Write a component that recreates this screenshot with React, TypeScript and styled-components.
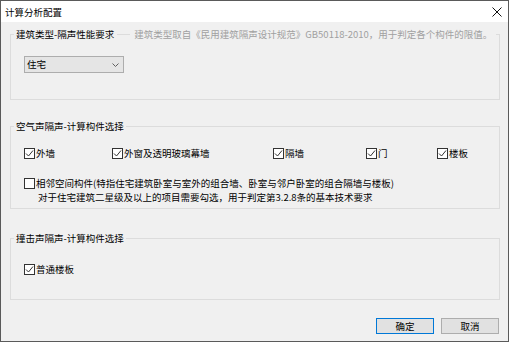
import styled, { createGlobalStyle } from "styled-components";

const GlobalStyle = createGlobalStyle`
  html, body {
    margin: 0;
    padding: 0;
    background: #ffffff;
  }
  body {
    font-family: "Noto Sans CJK SC", "Noto Sans", sans-serif;
    font-size: 9.5px;
    color: #000;
  }
`;

const Window = styled.div`
  width: 509px;
  height: 342px;
  box-sizing: border-box;
  border: 1px solid #5a5a5a;
  background: #f0f0f0;
  display: flex;
  flex-direction: column;
`;

const TitleBar = styled.div`
  height: 21px;
  background: #ffffff;
  display: flex;
  align-items: center;
  justify-content: space-between;
  padding: 0 6px 0 4px;
  line-height: 16px;
`;

const CloseButton = styled.span`
  display: flex;
  width: 10px;
  height: 10px;
  margin-top: 0px;
`;

const Body = styled.div`
  flex: 1;
  display: flex;
  flex-direction: column;
  padding: 4px 8px 0 9px;
`;

const Group = styled.fieldset<{ $gap: number }>`
  margin: ${(p) => p.$gap}px 0 0 0;
  padding: 0;
  border: 1px solid #dcdcdc;
  min-width: 0;
`;

const Legend = styled.legend`
  margin-left: 3px;
  padding: 0 2px;
  line-height: 16px;
  height: 16px;
  display: flex;
  align-items: center;
`;

const Dash = styled.span`
  width: 13px;
  height: 1px;
  background: #dcdcdc;
  margin: 0 4px 0 3px;
`;

const Note = styled.span`
  color: #a0a0a0;
  padding-right: 2px;
`;

const Inner = styled.div<{ $top: number; $bottom: number }>`
  padding: ${(p) => p.$top}px 0 ${(p) => p.$bottom}px 13px;
  display: flex;
  flex-direction: column;
`;

const Select = styled.div`
  width: 100px;
  height: 17px;
  box-sizing: border-box;
  border: 1px solid #adadad;
  background: #e5e5e5;
  display: flex;
  align-items: center;
  justify-content: space-between;
  padding: 0 4px 0 2px;
  line-height: 15px;
`;

const CheckRow = styled.div`
  display: grid;
  grid-template-columns: 88px 161px 93px 71px auto;
  height: 16px;
  align-items: center;
`;

const CheckLabel = styled.label<{ $align?: string }>`
  display: flex;
  align-items: ${(p) => p.$align || "center"};
  gap: 1px;
  line-height: 16px;
`;

const Box = styled.span<{ $top?: number }>`
  width: 11px;
  height: 11px;
  box-sizing: border-box;
  border: 1px solid #333333;
  background: #ffffff;
  display: flex;
  align-items: center;
  justify-content: center;
  flex-shrink: 0;
  margin-top: ${(p) => p.$top || 0}px;
`;

const MultiText = styled.div`
  line-height: 14px;
  margin-top: 0px;
  div + div {
    padding-left: 2px;
  }
`;

const Spacer = styled.div<{ $h: number }>`
  height: ${(p) => p.$h}px;
`;

const ButtonRow = styled.div`
  display: flex;
  justify-content: flex-end;
  gap: 7px;
  margin-top: 18px;
  padding-right: 1px;
`;

const Button = styled.div<{ $primary?: boolean }>`
  width: 58px;
  height: 16px;
  box-sizing: border-box;
  border: 1px solid ${(p) => (p.$primary ? "#0078d7" : "#adadad")};
  background: #e1e1e1;
  display: flex;
  align-items: center;
  justify-content: center;
  line-height: 14px;
`;

function Check({ checked }: { checked: boolean }) {
  return (
    <svg width="9" height="9" viewBox="0 0 9 9">
      {checked && (
        <path d="M1 4.5 L3.5 7 L8 1.5" fill="none" stroke="#333" strokeWidth="1" />
      )}
    </svg>
  );
}

function CheckItem({ label, checked = true }: { label: string; checked?: boolean }) {
  return (
    <CheckLabel>
      <Box>
        <Check checked={checked} />
      </Box>
      <span>{label}</span>
    </CheckLabel>
  );
}

export default function App() {
  return (
    <>
      <GlobalStyle />
      <Window>
        <TitleBar>
          <span>计算分析配置</span>
          <CloseButton>
            <svg width="10" height="10" viewBox="0 0 10 10">
              <path d="M0.5 0.5 L9.5 9.5 M9.5 0.5 L0.5 9.5" stroke="#111" strokeWidth="1" />
            </svg>
          </CloseButton>
        </TitleBar>
        <Body>
          <Group $gap={0}>
            <Legend>
              <span>建筑类型-隔声性能要求</span>
              <Dash />
              <Note>建筑类型取自《民用建筑隔声设计规范》GB50118-2010，用于判定各个构件的限值。</Note>
            </Legend>
            <Inner $top={14} $bottom={26}>
              <Select>
                <span>住宅</span>
                <svg width="7" height="4" viewBox="0 0 7 4">
                  <path d="M0.5 0.5 L3.5 3.5 L6.5 0.5" fill="none" stroke="#606060" strokeWidth="1" />
                </svg>
              </Select>
            </Inner>
          </Group>

          <Group $gap={18}>
            <Legend>
              <span>空气声隔声-计算构件选择</span>
            </Legend>
            <Inner $top={11} $bottom={4}>
              <CheckRow>
                <CheckItem label="外墙" />
                <CheckItem label="外窗及透明玻璃幕墙" />
                <CheckItem label="隔墙" />
                <CheckItem label="门" />
                <CheckItem label="楼板" />
              </CheckRow>
              <Spacer $h={15} />
              <CheckLabel $align="flex-start">
                <Box $top={2}>
                  <Check checked={false} />
                </Box>
                <MultiText>
                  <div>相邻空间构件(特指住宅建筑卧室与室外的组合墙、卧室与邻户卧室的组合隔墙与楼板)</div>
                  <div>对于住宅建筑二星级及以上的项目需要勾选，用于判定第3.2.8条的基本技术要求</div>
                </MultiText>
              </CheckLabel>
            </Inner>
          </Group>

          <Group $gap={21}>
            <Legend>
              <span>撞击声隔声-计算构件选择</span>
            </Legend>
            <Inner $top={15} $bottom={22}>
              <CheckItem label="普通楼板" />
            </Inner>
          </Group>

          <ButtonRow>
            <Button $primary>确定</Button>
            <Button>取消</Button>
          </ButtonRow>
        </Body>
      </Window>
    </>
  );
}
